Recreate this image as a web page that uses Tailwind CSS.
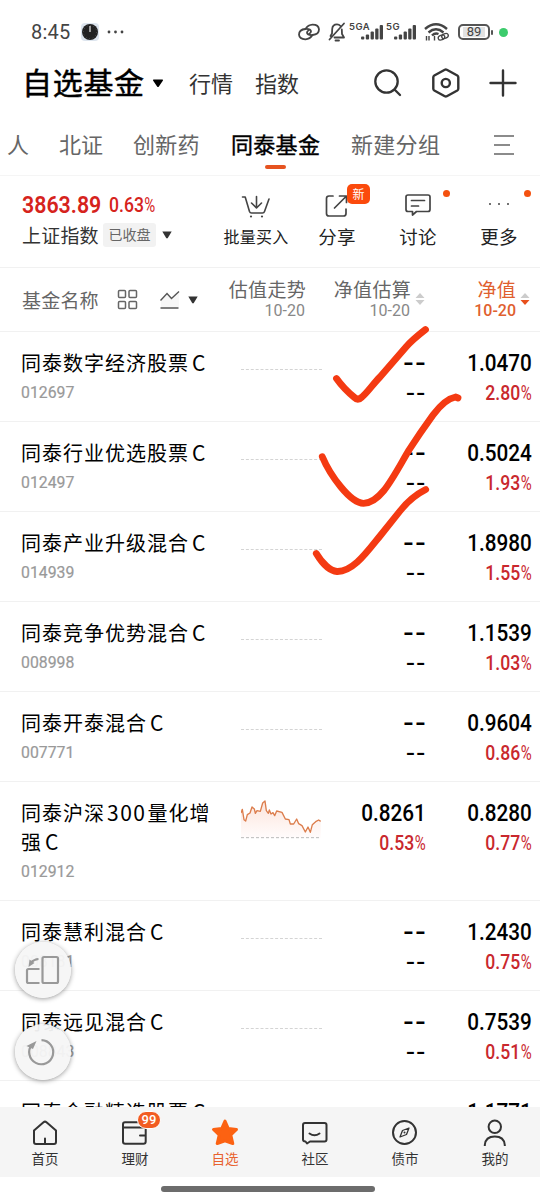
<!DOCTYPE html>
<html lang="zh-CN">
<head>
  <meta charset="UTF-8" />
  <meta name="viewport" content="width=device-width, initial-scale=1.0" />
  <title>自选基金</title>
  <script src="https://cdn.jsdelivr.net/npm/@tailwindcss/browser@4"></script>
</head>
<body class="bg-white font-['Noto_Sans_CJK_SC',sans-serif] text-black">
  <div class="relative w-[540px] h-[1200px] overflow-hidden flex flex-col whitespace-nowrap">

    <!-- status bar -->
    <div class="h-14 shrink-0 pt-2 flex items-center text-[#444]">
      <span class="ml-[31px] w-[42px] text-[20px] leading-6 font-['Roboto',sans-serif] tracking-[0.2px]">8:45</span>
      <svg class="ml-[8px]" width="18" height="18" viewBox="0 0 18 18">
        <rect width="18" height="18" rx="4" fill="#dde5ee" />
        <circle cx="9" cy="9" r="8" fill="#222" />
        <path d="M9 3v6" stroke="#ddd" stroke-width="1.3" />
        <circle cx="9" cy="9" r="6.6" fill="none" stroke="#777" stroke-width=".8" stroke-dasharray=".6 2.85" />
      </svg>
      <svg class="ml-[8px]" width="18" height="4" viewBox="0 0 18 4" fill="#444">
        <circle cx="2" cy="2" r="1.4" /><circle cx="8.500" cy="2" r="1.4" /><circle cx="15" cy="2" r="1.4" />
      </svg>
      <svg class="ml-[173px]" width="22" height="18" viewBox="0 0 22 18" fill="none" stroke="#444" stroke-width="1.8" stroke-linecap="round">
        <path d="M7.500 6Q10 2 14.500 1.700Q20.500 1.600 21 6.300Q21 11.500 14.500 12Q9.500 12.300 9 9.800Q9 8.200 10.500 7.500" />
        <path d="M14.500 12Q12 16 7.500 16.300Q1.500 16.400 1 11.700Q1 6.500 7.500 6Q12.500 5.700 13 8.200Q13 9.800 11.500 10.500" />
      </svg>
      <svg class="ml-[8px]" width="18" height="20" viewBox="0 0 18 20" fill="none" stroke="#444" stroke-width="1.8" stroke-linecap="round" stroke-linejoin="round">
        <path d="M12.500 4Q11 2.300 9 2.300Q4.500 2.300 4.200 7L4 11.500L2.500 14M6.500 15.500H16L14 12L13.800 7.500M7.500 18.500h3.500M16 1.500L1.500 17.500" />
      </svg>
      <div class="relative w-[36px] h-[20px] ml-px">
        <span class="absolute left-[2px] top-0 text-[9.500px] leading-[9px] font-semibold font-['Inter',sans-serif] tracking-[0.5px]">5GA</span>
        <svg class="absolute left-[14px] top-[3px]" width="22" height="15" viewBox="0 0 22 15" fill="#444">
          <rect y="11.500" width="3.300" height="3" rx="1" /><rect x="4.800" y="9.500" width="3.300" height="5" rx="1" /><rect x="9.600" y="6.500" width="3.300" height="8" rx="1" /><rect x="14.200" y="3.500" width="3.300" height="11" rx="1" /><rect x="18.700" y="0" width="3.300" height="14.500" rx="1" />
        </svg>
      </div>
      <div class="relative w-[32px] h-[20px] ml-px">
        <span class="absolute left-[2px] top-0 text-[9.500px] leading-[9px] font-semibold font-['Inter',sans-serif] tracking-[0.5px]">5G</span>
        <svg class="absolute left-[10px] top-[3px]" width="22" height="15" viewBox="0 0 22 15" fill="#444">
          <rect y="11.500" width="3.300" height="3" rx="1" /><rect x="4.800" y="9.500" width="3.300" height="5" rx="1" /><rect x="9.600" y="6.500" width="3.300" height="8" rx="1" /><rect x="14.200" y="3.500" width="3.300" height="11" rx="1" /><rect x="18.700" y="0" width="3.300" height="14.500" rx="1" />
        </svg>
      </div>
      <svg class="ml-[8px]" width="26" height="20" viewBox="0 0 26 20" fill="none" stroke="#444" stroke-width="2.400">
        <path d="M1 7Q12 -2.500 23 7M4.500 10.500Q12 4.200 19.500 10.500M8 13.500Q11 10.500 14.500 12" />
        <g stroke-width="1.3"><ellipse cx="17.500" cy="15.500" rx="3.400" ry="2.300" transform="rotate(-20 17.500 15.500)" /><ellipse cx="21" cy="14" rx="3.400" ry="2.300" transform="rotate(-20 21 14)" /></g>
        <path d="M2.500 14v4.500M5 14v4.500M10.500 14v4.500" stroke-width="1.400" />
      </svg>
      <div class="ml-[8px] w-[32px] h-[16px] rounded-[5px] border-2 border-[#555] p-px">
        <div class="h-full w-[22px] ml-[2px] bg-[#e2e2e2] text-[13px] leading-[10px] text-center font-['Roboto',sans-serif]">89</div>
      </div>
      <div class="w-[2px] h-[5px] ml-px rounded bg-[#555]"></div>
      <div class="ml-[6px] w-[9px] h-[9px] rounded-full bg-[#3ccb6c]"></div>
    </div>

    <!-- title bar -->
    <div class="h-[54px] shrink-0 flex items-center">
      <h1 class="ml-[22px] mt-[-4px] w-[124px] text-[30px] leading-[40px] tracking-[0.7px] [-webkit-text-stroke:0.5px_#000]">自选基金</h1>
      <svg class="ml-[6px]" width="12" height="9" viewBox="0 0 12 9"><path d="M1.500 .5h9q1 .3.3 1.300L6.900 7.500q-.9 1-1.800 0L1.200 1.800Q.5.800 1.500.5z" /></svg>
      <span class="ml-[25px] mt-[-2px] w-[46px] text-[22px] leading-8 text-[#333]">行情</span>
      <span class="ml-[20px] mt-[-2px] w-[46px] text-[22px] leading-8 text-[#333]">指数</span>
      <svg class="ml-[73px]" width="28" height="28" viewBox="0 0 28 28" fill="none" stroke="#333" stroke-width="2.300" stroke-linecap="round">
        <circle cx="12.500" cy="12.500" r="11.200" /><path d="M20.500 20.500l5.500 5.500" />
      </svg>
      <svg class="ml-[30px]" width="28" height="30" viewBox="0 0 28 30" fill="none" stroke="#333" stroke-width="2.400" stroke-linejoin="round">
        <path d="M12.800 1.700q1-.5 2 0l10.500 5.800q1 .6 1 1.700v11.600q0 1.100-1 1.700l-10.500 5.800q-1 .5-2 0L2.300 22.500q-1-.6-1-1.700V9.200q0-1.100 1-1.700z" /><circle cx="13.800" cy="15" r="4.100" />
      </svg>
      <svg class="ml-[29px]" width="28" height="28" viewBox="0 0 28 28" stroke="#333" stroke-width="2.400" stroke-linecap="round"><path d="M1.500 14h25M14 1.500v25" /></svg>
    </div>

    <!-- group tabs -->
    <div class="h-[66px] shrink-0 border-b border-[#f5f5f5] flex items-start pt-[17px] text-[22px] leading-8 text-[#666]">
      <span class="ml-[7px] w-[22px]">人</span>
      <span class="ml-[30px] w-[44px]">北证</span>
      <span class="ml-[30px] w-[67px] tracking-[0.2px]">创新药</span>
      <div class="ml-[31px] w-[89px] text-black tracking-[0.3px]">
        <span class="[-webkit-text-stroke:0.4px_#000]">同泰基金</span>
        <div class="mt-[6px] ml-[34px] w-[21px] h-[4px] rounded-full bg-[#e65320]"></div>
      </div>
      <span class="ml-[31px] w-[90px] tracking-[0.3px]">新建分组</span>
      <svg class="ml-[53px] mt-[8px]" width="20" height="20" viewBox="0 0 20 20" stroke="#666" stroke-width="1.300"><path d="M0 1h20M0 10h16M0 19h20" /></svg>
    </div>

    <!-- index summary and actions -->
    <div class="h-[92px] shrink-0 border-b border-[#f1f1f1] flex">
      <div class="ml-[22px] w-[186px] pt-[14px]">
        <div class="h-[28px] pt-px flex items-center text-[#d6231c] font-medium font-['Roboto',sans-serif]">
          <span class="w-[87px] text-[24px] leading-7"><span class="inline-block origin-left scale-x-[0.89] font-semibold">3863.89</span></span>
          <span class="text-[20px] leading-7"><span class="inline-block origin-left scale-x-[0.88]">0.63<span class="inline-block origin-left scale-x-[0.85] font-normal">%</span></span></span>
        </div>
        <div class="h-[34px] flex items-center text-[19px] leading-7 text-[#333]">
          <span class="w-[78px] tracking-[0.2px]">上证指数</span>
          <span class="ml-[3px] w-[53px] h-[24px] rounded-[3px] bg-[#f2f2f2] text-[14px] leading-[23px] text-center text-[#666]">已收盘</span>
          <svg class="ml-[6px]" width="10" height="8" viewBox="0 0 10 8" fill="#333"><path d="M.3.500h9.400L5.800 7q-.8.800-1.600 0z" /></svg>
        </div>
      </div>
      <div class="ml-[8px] w-[80px] flex flex-col items-center pt-[19px]">
        <svg width="30" height="23" viewBox="0 0 30 23" fill="none" stroke="#444" stroke-width="1.600" stroke-linecap="round" stroke-linejoin="round">
          <path d="M1.500 2h2.700L8.500 16.500Q9 18 10.500 18h11Q23 18 23.500 16.500L28 4M15.500 1.500v10.500M10.500 8l5 5 5-5" />
          <g fill="#444" stroke="none"><circle cx="10" cy="21.500" r="1.100" /><circle cx="21" cy="21.500" r="1.100" /></g>
        </svg>
        <span class="mt-[6px] text-[16px] leading-6 text-[#222] tracking-[0.3px]">批量买入</span>
      </div>
      <div class="relative w-[82px] flex flex-col items-center pt-[18px]">
        <svg width="24" height="24" viewBox="0 0 24 24" fill="none" stroke="#444" stroke-width="1.700" stroke-linecap="round" stroke-linejoin="round">
          <path d="M8 2H4Q1.500 2 1.500 4.500v15Q1.500 22 4 22H18.500Q21 22 21 19.500V15M9.500 14L21 2.500M14.500 2H21.500V8.500" />
        </svg>
        <span class="mt-[5px] text-[18.500px] leading-[26px] text-[#222] tracking-[0.3px]">分享</span>
        <span class="absolute left-[51px] top-[8px] w-[23px] h-[20px] rounded-[5px] bg-[#fb4a0c] text-white text-[12px] leading-[19px] text-center">新</span>
      </div>
      <div class="relative w-[80px] flex flex-col items-center pt-[17px]">
        <svg width="26" height="24" viewBox="0 0 26 24" fill="none" stroke="#444" stroke-width="1.700" stroke-linecap="round" stroke-linejoin="round">
          <path d="M3 2H23Q25 2 25 4V16.500Q25 18.500 23 18.500H11.500L7.500 22V18.500H3Q1 18.500 1 16.500V4Q1 2 3 2zM6.500 7.500H19.500M6.500 13H13.500" />
        </svg>
        <span class="mt-[6px] text-[18.500px] leading-[26px] text-[#222] tracking-[0.3px]">讨论</span>
        <span class="absolute left-[65px] top-[14px] w-[7px] h-[7px] rounded-full bg-[#f4510f]"></span>
      </div>
      <div class="relative w-[82px] flex flex-col items-center pt-[25px]">
        <svg width="22" height="6" viewBox="0 0 22 6" fill="#444"><circle cx="2" cy="3" r="1" /><circle cx="11" cy="3" r="1" /><circle cx="20" cy="3" r="1" /></svg>
        <span class="mt-[16px] text-[18.500px] leading-[26px] text-[#222] tracking-[0.3px]">更多</span>
        <span class="absolute left-[66px] top-[14px] w-[7px] h-[7px] rounded-full bg-[#f4510f]"></span>
      </div>
    </div>

    <!-- column headings -->
    <div class="h-[64px] shrink-0 border-b border-[#f1f1f1] flex text-[19px] leading-7 text-[#666]">
      <div class="ml-[22px] w-[176px] flex items-center">
        <span class="w-[77px] tracking-[0.2px]">基金名称</span>
        <svg class="ml-[18px]" width="21" height="21" viewBox="0 0 21 21" fill="none" stroke="#666" stroke-width="1.500">
          <rect x="1.500" y="1.500" width="7" height="7" rx="1" /><rect x="12" y="1.500" width="7.500" height="7" rx="1" /><rect x="1.500" y="12.500" width="7" height="7" rx="1" /><rect x="12" y="12.500" width="7.500" height="7" rx="1" />
        </svg>
        <svg class="ml-[22px]" width="20" height="20" viewBox="0 0 20 20" fill="none" stroke="#555" stroke-width="1.400">
          <path d="M1 10L6.500 4L11.500 9L19 1.500V17H1z" fill="#f7f7f7" stroke="none" /><path d="M.500 10.500L7 3.500L11.500 8.500L19 1.500M.500 18h18" />
        </svg>
        <svg class="ml-[8px]" width="10" height="8" viewBox="0 0 10 8" fill="#333"><path d="M.3.500h9.400L5.800 7q-.8.800-1.600 0z" /></svg>
      </div>
      <div class="w-[108px] flex flex-col items-end pt-[7px]">
        <span class="tracking-[0.3px]">估值走势</span>
        <span class="mt-[-2px] pr-px text-[16px] leading-5 text-[#888] font-['Roboto',sans-serif]">10-20</span>
      </div>
      <div class="w-[105px] flex flex-col items-end pt-[7px]">
        <span class="tracking-[0.3px]">净值估算</span>
        <span class="mt-[-2px] pr-px text-[16px] leading-5 text-[#888] font-['Roboto',sans-serif]">10-20</span>
      </div>
      <svg class="ml-[4px] mt-[25px]" width="10" height="12" viewBox="0 0 10 12" fill="#ccc"><path d="M.5 5h9L5 0zM.5 7h9L5 12z" /></svg>
      <div class="w-[91px] flex flex-col items-end pt-[7px] text-[#e0602f]">
        <span class="tracking-[0.3px]">净值</span>
        <span class="mt-[-2px] text-[16px] leading-5 font-medium font-['Roboto',sans-serif]">10-20</span>
      </div>
      <svg class="ml-[4px] mt-[25px]" width="10" height="12" viewBox="0 0 10 12"><path d="M.5 5h9L5 0z" fill="#ccc" /><path d="M.5 7h9L5 12z" fill="#e8501c" /></svg>
    </div>

    <!-- fund list -->
    <div id="fundList" class="h-[775px] shrink-0 overflow-hidden"></div>

    <!-- bottom navigation -->
    <div class="h-[70px] shrink-0 bg-[#f5f5f5] grid grid-cols-6 text-[13.500px] leading-5 text-[#333]">
      <div class="flex flex-col items-center pt-[12px]">
        <svg width="28" height="28" viewBox="0 0 28 28" fill="none" stroke="#333" stroke-width="2" stroke-linecap="round" stroke-linejoin="round">
          <path d="M12.500 3.200Q14 2 15.500 3.200L25 11.500V23Q25 25 23 25H5Q3 25 3 23V11.500zM14 19.500V24.500" />
        </svg>
        <span class="mt-px">首页</span>
      </div>
      <div class="relative flex flex-col items-center pt-[12px]">
        <svg width="28" height="28" viewBox="0 0 28 28" fill="none" stroke="#333" stroke-width="2" stroke-linecap="round" stroke-linejoin="round">
          <path d="M22.500 8V4Q22.500 3.300 21.500 3.300H4Q2 3.300 2 5.500V22.500Q2 24.700 4.200 24.700H22.500Q24.700 24.700 24.700 22.500V8.500H2.500M19 16.500H24.500" />
        </svg>
        <span class="mt-px">理财</span>
        <span class="absolute left-[47px] top-[4px] w-[24px] h-[18px] rounded-full bg-[#f25c22] border border-white text-white text-[13px] leading-[16px] text-center font-medium font-['Roboto',sans-serif]">99</span>
      </div>
      <div class="flex flex-col items-center pt-[12px] text-[#e8622e]">
        <svg width="28" height="28" viewBox="0 0 28 28" fill="#fc6212" stroke="#fc6212" stroke-width="3" stroke-linejoin="round">
          <path d="M14 2L17.300 9.500L25.500 10.500L19.800 16L21.800 24.500L14 21.800L6.200 24.500L8.200 16L2.500 10.500L10.700 9.500z" />
        </svg>
        <span class="mt-px">自选</span>
      </div>
      <div class="flex flex-col items-center pt-[12px]">
        <svg width="28" height="28" viewBox="0 0 28 28" fill="none" stroke="#333" stroke-width="2" stroke-linecap="round" stroke-linejoin="round">
          <path d="M4 4H23.500Q25.500 4 25.500 6V20.500Q25.500 22.500 23.500 22.500H9L6 24.500L4.500 22.500Q2 22.500 2 20.500V6Q2 4 4 4zM8.500 14.500Q13.500 18 18.500 14.500" />
        </svg>
        <span class="mt-px">社区</span>
      </div>
      <div class="flex flex-col items-center pt-[12px]">
        <svg width="28" height="28" viewBox="0 0 28 28" fill="none" stroke="#333" stroke-width="2" stroke-linejoin="round">
          <circle cx="13.500" cy="13.500" r="11.500" /><path d="M18 9L11.500 11.500L9 18L15.500 15.500z" stroke-width="1.300" /><circle cx="13.500" cy="13.500" r="1" fill="#333" stroke="none" />
        </svg>
        <span class="mt-px">债市</span>
      </div>
      <div class="flex flex-col items-center pt-[12px]">
        <svg width="28" height="28" viewBox="0 0 28 28" fill="none" stroke="#333" stroke-width="2">
          <circle cx="13.800" cy="7.800" r="6.200" /><path d="M3.800 27V26Q4.500 17.500 13.800 17.500T23.800 26V27" />
        </svg>
        <span class="mt-px">我的</span>
      </div>
    </div>
    <div class="grow flex justify-center pt-[9px] pr-[4px]">
      <div class="w-[214px] h-[6px] rounded-full bg-[#6c6c6c]"></div>
    </div>

    <!-- floating buttons -->
    <div class="absolute left-[15px] top-[942px] w-[56px] h-[56px] rounded-full bg-[#f5f5f5]/95 shadow-[0_1px_5px_rgba(0,0,0,0.4)] flex items-center justify-center">
      <svg class="mr-[3px]" width="36" height="32" viewBox="0 0 36 32" fill="none" stroke="#999" stroke-width="2.200" stroke-linejoin="round">
        <rect x="18.500" y="3" width="15.500" height="26" rx="1.500" /><path d="M15.500 15H4.500Q3 15 3 16.500V27.500Q3 29 4.500 29H15.500" /><path d="M7 8.500Q10 5.300 14.500 5" /><path d="M4.500 13L5.500 5.500L10.500 9z" fill="#999" stroke="none" />
      </svg>
    </div>
    <div class="absolute left-[15px] top-[1024px] w-[56px] h-[56px] rounded-full bg-[#f5f5f5]/95 shadow-[0_1px_5px_rgba(0,0,0,0.4)] flex items-center justify-center">
      <svg class="mr-[2px]" width="32" height="30" viewBox="0 0 32 30" fill="none" stroke="#999" stroke-width="2.200">
        <path d="M15.500 3.200A12 12 0 1 1 6 7.500" /><path d="M.5 9L10.500 4L7 12z" fill="#999" stroke="none" />
      </svg>
    </div>

    <!-- hand-drawn ticks -->
    <svg class="absolute left-0 top-0 pointer-events-none" width="540" height="1200" viewBox="0 0 540 1200" fill="none" stroke="#f43a12" stroke-width="6.800" stroke-linecap="round" stroke-linejoin="round">
      <path d="M336.500 378.500Q344 389 354.500 397.500Q358 401 362 397C368 392 373 384 380 377L406 347Q412 340 425.500 329.500" />
      <path d="M322.300 456.700C330 475 350 503 363.500 503.300C381 503 393 477 409 450Q420 433 433 415Q445 399 455.500 397L458 398" />
      <path d="M316.300 553.500C322 563 330 571 337 571.500C353 572 367 552 380 536L400 511Q411 497 425.700 489.500" />
    </svg>
  </div>

  <script>
    const funds = [
      { name: "同泰数字经济股票", cls: "C", code: "012697", nav: "1.0470", pct: "2.80" },
      { name: "同泰行业优选股票", cls: "C", code: "012497", nav: "0.5024", pct: "1.93" },
      { name: "同泰产业升级混合", cls: "C", code: "014939", nav: "1.8980", pct: "1.55" },
      { name: "同泰竞争优势混合", cls: "C", code: "008998", nav: "1.1539", pct: "1.03" },
      { name: "同泰开泰混合", cls: "C", code: "007771", nav: "0.9604", pct: "0.86" },
      { name: "同泰沪深<span class='ml-[2px] mr-px text-[21px] tracking-[1.500px]'>300</span>量化增<br>强", cls: "C", code: "012912", est: "0.8261", estPct: "0.53", nav: "0.8280", pct: "0.77" },
      { name: "同泰慧利混合", cls: "C", code: "008181", nav: "1.2430", pct: "0.75" },
      { name: "同泰远见混合", cls: "C", code: "008843", nav: "0.7539", pct: "0.51" },
      { name: "同泰金融精选股票", cls: "C", nav: "1.1771" },
    ];

    const emptyTrend = `<div class="mt-[37px] w-[81px] border-t border-dashed border-[#d4d4d4]"></div>`;

    const trend = `
      <svg class="mt-[17px]" width="82" height="40" viewBox="0 0 246 120" fill="none">
        <defs><linearGradient id="fade" x1="0" y1="0" x2="0" y2="1"><stop offset="0" stop-color="#fbd9cc" /><stop offset="1" stop-color="#fffafa" /></linearGradient></defs>
        <path d="M0 42L4 31L9 62L14 66L19 47L27 42L33 24L40 30L43 43L48 35L58 37L65 12L72 6L76 35L82 43L85 33L90 45L96 41L101 50L107 36L123 40L133 60L144 62L148 75L158 75L167 60L173 74L183 80L193 99L201 84L208 100L214 77L224 68L233 63L239 67V116H0z" fill="url(#fade)" opacity=".7" />
        <path d="M0 42L4 31L9 62L14 66L19 47L27 42L33 24L40 30L43 43L48 35L58 37L65 12L72 6L76 35L82 43L85 33L90 45L96 41L101 50L107 36L123 40L133 60L144 62L148 75L158 75L167 60L173 74L183 80L193 99L201 84L208 100L214 77L224 68L233 63L239 67" stroke="#dc7d4c" stroke-width="4" stroke-linejoin="round" />
        <path d="M0 116H239" stroke="#bbb" stroke-width="3" stroke-dasharray="9 6" />
      </svg>`;

    function figures(value, pct) {
      if (!value) {
        return `
          <div class="h-[30px] mt-[-1px] text-[30px] leading-[30px] tracking-[1.200px] mr-[-1px] font-['DejaVu_Sans',sans-serif]">--</div>
          <div class="h-[30px] text-[26px] leading-[30px] tracking-[0.700px] font-['DejaVu_Sans',sans-serif]">--</div>`;
      }
      return `
        <div class="h-[30px] pt-px text-[23px] leading-[30px] font-medium font-['Roboto',sans-serif]"><span class="inline-block origin-right scale-x-[0.9]">${value}</span></div>
        ${pct ? `<div class="h-[30px] mr-px text-[20px] leading-[30px] font-medium text-[#c9282d] font-['Roboto',sans-serif]"><span class="inline-block origin-right scale-x-[0.88]">${pct}<span class="inline-block origin-right scale-x-[0.85] ml-[-2px] font-normal">%</span></span></div>` : ""}`;
    }

    document.getElementById("fundList").innerHTML = funds.map(f => `
      <div class="flex border-b border-[#f1f1f1] ${f.est ? "h-[119px]" : "h-[90px]"}">
        <div class="ml-[21px] w-[220px] pt-[16px]">
          <div class="text-[20px] leading-[29px] tracking-[1px]">${f.name}<span class="ml-[3px] text-[21px]">${f.cls}</span></div>
          ${f.code ? `<div class="pt-px text-[17px] leading-[29px] text-[#999] font-['Roboto',sans-serif]"><span class="inline-block origin-left scale-x-[0.93] [-webkit-text-stroke:0.2px_#999]">${f.code}</span></div>` : ""}
        </div>
        <div class="w-[82px]">${f.est ? trend : emptyTrend}</div>
        <div class="w-[103px] pt-[16px] flex flex-col items-end">${f.code ? figures(f.est, f.estPct) : ""}</div>
        <div class="w-[106px] pt-[16px] flex flex-col items-end">${figures(f.nav, f.pct)}</div>
      </div>`).join("");
  </script>
</body>
</html>
